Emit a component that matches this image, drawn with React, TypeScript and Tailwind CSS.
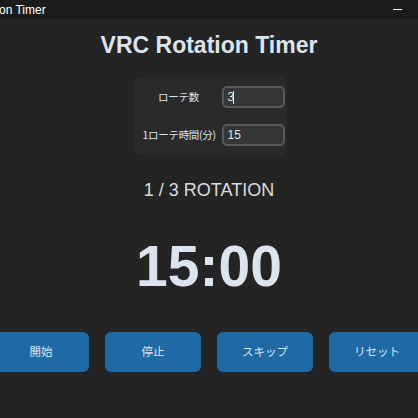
import React, { useState } from 'react';

const FONT = '"Liberation Sans", Arial, "Noto Sans CJK JP", sans-serif';
const JP = '"Noto Sans CJK JP", "Liberation Sans", sans-serif';

function Entry({ value, caret }: { value: string; caret?: boolean }) {
  return (
    <div className="h-[22px] w-[63px] rounded-[5px] border-2 border-[#565b5e] bg-[#343638] px-[4px] flex items-center text-[12px] text-[#dce4f0]" style={{ fontFamily: FONT }}>
      <span>{value}</span>
      {caret && <span className="-ml-[1px] h-[13px] w-[1px] bg-[#dce4f0]" />}
    </div>
  );
}

export default function App() {
  const [rounds] = useState('3');
  const [minutes] = useState('15');
  const buttons = ['開始', '停止', 'スキップ', 'リセット'];

  return (
    <div className="w-[418px] h-[418px] overflow-hidden bg-[#242424] flex flex-col" style={{ fontFamily: FONT }}>
      {/* window title bar */}
      <div className="h-[19px] shrink-0 bg-[#1c1c1c] flex items-center justify-between">
        <span className="text-[12px] text-white leading-none -ml-[1px]">on Timer</span>
        <span className="mr-[16px] h-[1px] w-[9px] bg-white" />
      </div>

      <div className="flex flex-col items-center">
        <h1 className="mt-[12px] text-[23px] leading-[28px] font-bold text-[#dce4f0]">VRC Rotation Timer</h1>

        <div className="mt-[18px] ml-[2px] w-[153px] rounded-[6px] bg-[#2a2a2a] py-[9px] pl-[9px] grid grid-cols-[72px_63px] gap-x-[7px] gap-y-[16px] items-center" style={{ fontFamily: JP }}>
          <span className="text-center text-[10.5px] tracking-[-0.3px] text-[#dce4f0]">ローテ数</span>
          <Entry value={rounds} caret />
          <span className="text-center text-[10.5px] tracking-[-0.3px] text-[#dce4f0] whitespace-nowrap">1ローテ時間(分)</span>
          <Entry value={minutes} />
        </div>

        <div className="mt-[24px] text-[18px] leading-[22px] text-[#dcdcdc]">1 / 3 ROTATION</div>

        <div className="mt-[33px] text-[57px] leading-[64px] font-bold text-[#dce4f0]">15:00</div>

        <div className="mt-[34px] w-full flex justify-center gap-[16px]">
          {buttons.map((b) => (
            <button
              key={b}
              className="h-[40px] w-[96px] shrink-0 rounded-[6px] bg-[#1f6aa5] text-[11.5px] text-[#dce4f0]"
              style={{ fontFamily: JP }}
            >
              {b}
            </button>
          ))}
        </div>
      </div>
    </div>
  );
}
